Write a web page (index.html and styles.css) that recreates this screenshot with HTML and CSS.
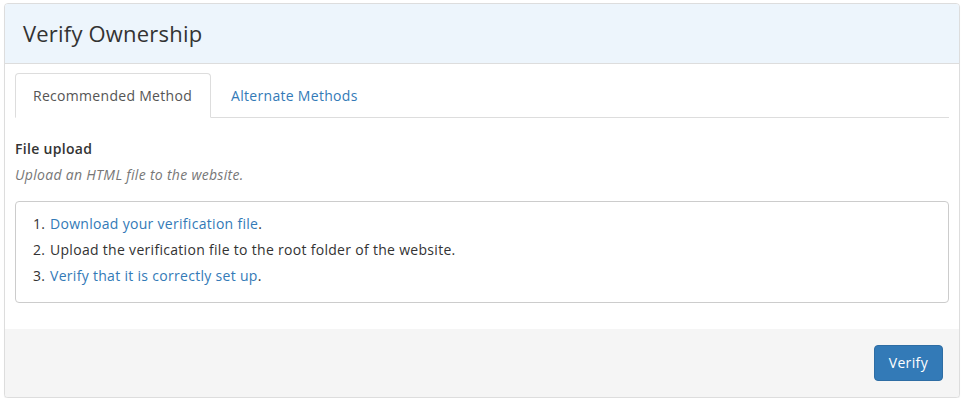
FILE: index.html
```html
<!DOCTYPE html>
<html>
<head>
<meta charset="utf-8">
<link rel="stylesheet" href="styles.css">
</head>
<body>
<div class="page">
  <div class="panel">
    <div class="panel-heading">
      <h3 class="panel-title">Verify Ownership</h3>
    </div>
    <div class="panel-body">
      <ul class="tabs">
        <li class="tab active"><span>Recommended Method</span></li>
        <li class="tab"><a href="#">Alternate Methods</a></li>
      </ul>
      <div class="tab-content">
        <h4 class="method-title">File upload</h4>
        <p class="method-desc">Upload an HTML file to the website.</p>
        <div class="steps-box">
          <ol class="steps">
            <li><a href="#">Download your verification file</a>.</li>
            <li>Upload the verification file to the root folder of the website.</li>
            <li><a href="#">Verify that it is correctly set up</a>.</li>
          </ol>
        </div>
      </div>
    </div>
    <div class="panel-footer">
      <button class="btn-primary">Verify</button>
    </div>
  </div>
</div>
</body>
</html>
```
FILE: styles.css
```css
html, body {
  margin: 0;
  padding: 0;
  background: #fff;
}
body {
  font-family: "Open Sans", "Liberation Sans", sans-serif;
  font-size: 14px;
  line-height: 20px;
  letter-spacing: 0.3px;
  color: #333;
}
a {
  color: #337ab7;
  text-decoration: none;
}
.page {
  padding: 3px 8px 0 4px;
}
.panel {
  border: 1px solid #ddd;
  border-radius: 4px;
  background: #fff;
  box-shadow: 0 1px 1px rgba(0, 0, 0, 0.07);
  overflow: hidden;
}
.panel-heading {
  background: #edf5fc;
  border-bottom: 1px solid #ddd;
  padding: 14px 18px;
}
.panel-title {
  margin: 0;
  font-size: 22px;
  line-height: 31px;
  font-weight: 400;
  letter-spacing: 0.2px;
  color: #333;
}
.panel-body {
  padding: 9px 10px 6px;
}
.tabs {
  list-style: none;
  margin: 0;
  padding: 0;
  display: flex;
  border-bottom: 1px solid #ddd;
}
.tab {
  margin-bottom: -1px;
  margin-right: 2px;
}
.tab span, .tab a {
  display: block;
  padding: 12px 17px 11px 17px;
  line-height: 20px;
  border: 1px solid transparent;
  border-radius: 4px 4px 0 0;
}
.tab.active span {
  padding-right: 18px;
  border-color: #ddd;
  border-bottom-color: #fff;
  background: #fff;
  color: #555;
}
.tab-content {
  padding-top: 21px;
}
.method-title {
  margin: 0;
  font-size: 14px;
  font-weight: 600;
  line-height: 20px;
}
.method-desc {
  margin: 6px 0 16px;
  font-style: italic;
  color: #777;
}
.steps-box {
  border: 1px solid #ccc;
  border-radius: 4px;
  padding: 9px 16px 13px 17px;
  margin-bottom: 20px;
}
.steps {
  margin: 0;
  padding: 0;
  list-style: none;
  counter-reset: step;
}
.steps li {
  line-height: 26px;
  counter-increment: step;
  display: flex;
}
.steps li::before {
  content: counter(step) ".";
  width: 17px;
  flex: none;
}
.panel-footer {
  background: #f5f5f5;
  padding: 16px 16px 16px;
  display: flex;
  justify-content: flex-end;
}
.btn-primary {
  font-family: inherit;
  font-size: 14px;
  line-height: 20px;
  letter-spacing: 0.35px;
  color: #fff;
  background: #337ab7;
  border: 1px solid #2e6da4;
  border-radius: 4px;
  padding: 7px 14px;
  cursor: pointer;
}
```
